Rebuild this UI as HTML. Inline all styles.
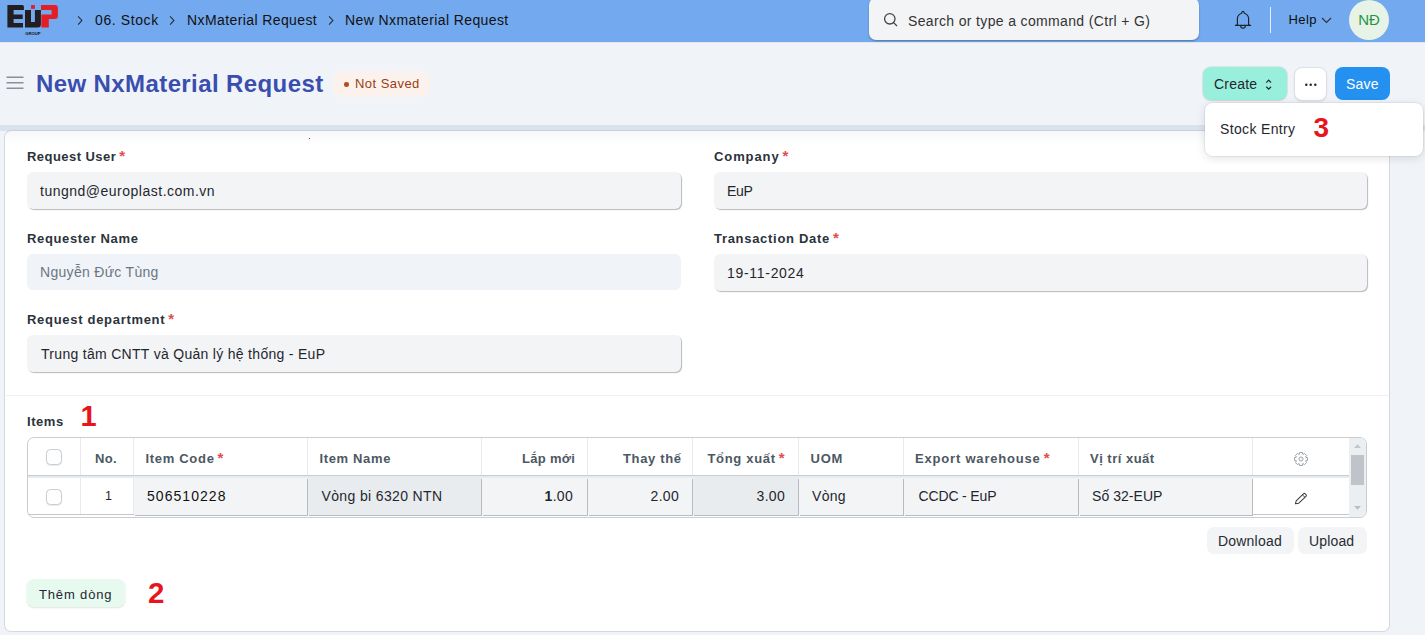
<!DOCTYPE html>
<html><head><meta charset="utf-8">
<style>
*{box-sizing:border-box;margin:0;padding:0}
html,body{width:1425px;height:635px;overflow:hidden;background:#f0f4f9;font-family:"Liberation Sans",sans-serif;color:#1f272e;position:relative}
.a{position:absolute;white-space:nowrap}
.hdr{left:0;top:0;width:1425px;height:42px;background:#73a9ee}
.crumb{font-size:14px;color:#111;top:12px;letter-spacing:.4px}
.search{left:869px;top:-2px;width:330px;height:42px;background:#f3f4f6;border-radius:7px;box-shadow:0 1px 2px rgba(0,0,0,.3)}
.avatar{left:1349px;top:0;width:40px;height:40px;border-radius:50%;background:#e8f3e8;color:#24963f;font-size:15px;text-align:center;line-height:40px}
.band{left:0;top:125px;width:1425px;height:6px;background:#d8e3ee}
.card{left:4px;top:130px;width:1386px;height:502px;background:linear-gradient(#f5f7fa,#fff 14px);border:1px solid #d6d9dc;border-top-color:#cdd1d6;border-radius:7px}
.title{left:36px;top:70px;font-size:24px;font-weight:bold;color:#3a4eae;letter-spacing:.4px}
.badge{left:333px;top:71px;width:97px;height:26px;background:#fcf2ed;border-radius:8px}
.lbl{font-size:13px;font-weight:bold;color:#2b333b;letter-spacing:.6px}
.req{color:#e24c4c;margin-left:3px;letter-spacing:0;font-size:15px;line-height:0}
.inp{height:37px;background:#f3f4f6;border-radius:6px;box-shadow:1px 1px 1px rgba(0,0,0,.28)}
.itxt{font-size:14px;color:#1f272e;letter-spacing:.3px}
.ann{color:#e8151c;font-weight:bold;font-size:29px;line-height:1}
.th{font-size:13px;font-weight:bold;color:#4c5863;letter-spacing:.4px;top:451px}
.td{font-size:14px;color:#1f272e;top:488px;letter-spacing:.3px}
.cellbg{top:476px;height:40px}
.vl{top:438px;width:1px;height:78px;background:#e6e9ec}
.cb{width:16px;height:15.5px;border:1px solid #c5ccd3;border-radius:4.5px;background:#fff;box-shadow:0 1px 1px rgba(0,0,0,.08)}
</style></head><body>
<!-- header -->
<div class="a hdr"></div>
<div class="a" style="left:0;top:42px;width:1425px;height:1px;background:#e4e7eb"></div>
<svg class="a" style="left:0;top:0" width="64" height="40" viewBox="0 0 64 40">
  <path fill="#231f20" d="M7.4 5.1H22.4Q23.9 5.1 23.9 6.6V9.9H13.6V14.5H22.7V19H13.6V23H23V27.5H7.4Z"/>
  <path fill="#231f20" d="M25 9.9H31V22H34.9V9.9H40.9V24.5Q40.9 27.5 37.9 27.5H25Z"/>
  <rect fill="#e31e24" x="31" y="5.1" width="3.9" height="3.7"/>
  <path fill="#e31e24" d="M41 5.1H54.9Q57.9 5.1 57.9 8.1V16Q57.9 19 54.9 19H48.8V27.5H41.4V14.5H51.6V9.9H41Z"/>
  <text x="32.9" y="34.5" font-size="4.2" font-weight="bold" text-anchor="middle" fill="#111" font-family="Liberation Sans">GROUP</text>
</svg>
<svg class="a" style="left:77px;top:16px" width="7" height="10" viewBox="0 0 7 10"><path d="M1.1 0.4L4.9 4.4L1.1 8.6" fill="none" stroke="#2a2f35" stroke-width="1.1"/></svg>
<div class="a crumb" style="left:95px;letter-spacing:.6px">06. Stock</div>
<svg class="a" style="left:169px;top:16px" width="7" height="10" viewBox="0 0 7 10"><path d="M1.1 0.4L4.9 4.4L1.1 8.6" fill="none" stroke="#2a2f35" stroke-width="1.1"/></svg>
<div class="a crumb" style="left:187px">NxMaterial Request</div>
<svg class="a" style="left:328px;top:16px" width="7" height="10" viewBox="0 0 7 10"><path d="M1.1 0.4L4.9 4.4L1.1 8.6" fill="none" stroke="#2a2f35" stroke-width="1.1"/></svg>
<div class="a crumb" style="left:345px">New Nxmaterial Request</div>
<div class="a search"></div>
<svg class="a" style="left:883px;top:12px" width="16" height="16" viewBox="0 0 16 16"><circle cx="6.8" cy="6.8" r="5.2" fill="none" stroke="#444" stroke-width="1.3"/><path d="M10.6 10.6L14 14" stroke="#444" stroke-width="1.3"/></svg>
<div class="a" style="left:908px;top:13px;font-size:14px;color:#333;letter-spacing:.35px">Search or type a command (Ctrl + G)</div>
<svg class="a" style="left:1228px;top:4px" width="32" height="32" viewBox="0 0 32 32"><path d="M13.6 9.2Q14.2 7.4 15 7.4Q15.8 7.4 16.4 9.2Q20.3 10.6 20.6 14.2V20.4L22.6 21.4H7.4L9.4 20.4V14.2Q9.7 10.6 13.6 9.2Z" fill="none" stroke="#1e2329" stroke-width="1.15" stroke-linejoin="round"/><path d="M12.6 21.7A2.4 2.4 0 0 0 17.4 21.7" fill="none" stroke="#1e2329" stroke-width="1.1"/></svg>
<div class="a" style="left:1270px;top:7px;width:1px;height:26px;background:#e8eef8"></div>
<div class="a" style="left:1288.5px;top:12px;font-size:13px;color:#0d0d0d;letter-spacing:.45px">Help</div>
<svg class="a" style="left:1321px;top:17px" width="11" height="7" viewBox="0 0 11 7"><path d="M1 1L5.5 5.5L10 1" fill="none" stroke="#333" stroke-width="1.2"/></svg>
<div class="a avatar">NĐ</div>

<!-- page head -->
<svg class="a" style="left:6px;top:76.3px" width="18" height="14" viewBox="0 0 18 14"><path d="M0.5 1.3H17.5M0.5 6.8H17.5M0.5 12.3H17.5" stroke="#8a9096" stroke-width="1.4"/></svg>
<div class="a title">New NxMaterial Request</div>
<div class="a badge"></div>
<div class="a" style="left:344px;top:82px;width:4.5px;height:4.5px;border-radius:50%;background:#b0501f"></div>
<div class="a" style="left:355px;top:76px;font-size:13px;color:#9a3d14;letter-spacing:.45px">Not Saved</div>

<div class="a" style="left:1203px;top:67px;width:84px;height:33px;background:#98f0dc;border-radius:8px;box-shadow:0 0 0 1px rgba(0,0,0,.06),0 1px 2px rgba(0,0,0,.08)"></div>
<div class="a" style="left:1214px;top:76px;font-size:14px;color:#1f272e;letter-spacing:.2px">Create</div>
<svg class="a" style="left:1264px;top:78px" width="9" height="12" viewBox="0 0 9 12"><path d="M2.3 4.6L4.7 2.1L7 4.6M2.3 8.7L4.7 11.1L7 8.7" fill="none" stroke="#22272c" stroke-width="1.25"/></svg>
<div class="a" style="left:1294px;top:66.5px;width:32.5px;height:34px;background:#fff;border:1px solid #dcdfe3;border-radius:8px;box-shadow:0 1px 2px rgba(0,0,0,.08)"></div>
<svg class="a" style="left:1303px;top:82px" width="14" height="4" viewBox="0 0 14 4"><circle cx="3.3" cy="2.7" r="1.25" fill="#22272c"/><circle cx="7.7" cy="2.7" r="1.25" fill="#22272c"/><circle cx="12.3" cy="2.7" r="1.25" fill="#22272c"/></svg>
<div class="a" style="left:1335px;top:67px;width:55px;height:33px;background:#2490ef;border-radius:8px"></div>
<div class="a" style="left:1346px;top:76px;font-size:14px;color:#fff;letter-spacing:.2px">Save</div>

<div class="a band"></div>
<div class="a card"></div>

<!-- dropdown -->
<div class="a" style="left:1204.5px;top:102.5px;width:218px;height:53px;background:#fff;border-radius:8px;box-shadow:0 0 0 1px rgba(0,0,0,.05),0 2px 10px rgba(0,0,0,.12)"></div>
<div class="a" style="left:1220px;top:121px;font-size:14px;color:#1f272e;letter-spacing:.35px">Stock Entry</div>
<div class="a ann" style="left:1313.5px;top:113.5px;font-size:28px">3</div>

<div class="a" style="left:309px;top:138px;width:1px;height:1px;background:#e8141c"></div>
<!-- form -->
<div class="a lbl" style="left:27px;top:149px;letter-spacing:.45px">Request User<span class="req">*</span></div>
<div class="a inp" style="left:27px;top:172px;width:654px"></div>
<div class="a itxt" style="left:40px;top:183px;letter-spacing:.5px">tungnd@europlast.com.vn</div>

<div class="a lbl" style="left:714px;top:149px;letter-spacing:.9px">Company<span class="req">*</span></div>
<div class="a inp" style="left:714px;top:172px;width:653px"></div>
<div class="a itxt" style="left:727px;top:183px;letter-spacing:-.3px">EuP</div>

<div class="a lbl" style="left:27px;top:231px;letter-spacing:.64px">Requester Name</div>
<div class="a inp" style="left:27px;top:254px;width:654px;height:36px;background:#f0f3f8;box-shadow:none"></div>
<div class="a itxt" style="left:40px;top:264px;color:#6c7680">Nguyễn Đức Tùng</div>

<div class="a lbl" style="left:714px;top:231px;letter-spacing:.7px">Transaction Date<span class="req">*</span></div>
<div class="a inp" style="left:714px;top:254px;width:653px"></div>
<div class="a itxt" style="left:727px;top:265px;letter-spacing:.7px">19-11-2024</div>

<div class="a lbl" style="left:27px;top:312px;letter-spacing:.7px">Request department<span class="req">*</span></div>
<div class="a inp" style="left:27px;top:335px;width:654px"></div>
<div class="a itxt" style="left:41px;top:346px">Trung tâm CNTT và Quản lý hệ thống - EuP</div>

<div class="a" style="left:6px;top:395px;width:1383px;height:1px;background:#eef0f2"></div>

<!-- items -->
<div class="a lbl" style="left:27px;top:414px;letter-spacing:.56px">Items</div>
<div class="a ann" style="left:80.5px;top:401.5px">1</div>

<div class="a" style="left:27px;top:437px;width:1340px;height:81px;border:1px solid #c9cdd1;border-radius:7px;background:#fff"></div>
<div class="a" style="left:28px;top:475px;width:1321px;height:1px;background:#c9cdd1"></div>
<div class="a" style="left:28px;top:476px;width:1321px;height:2px;background:#e6ebef"></div>
<div class="a" style="left:28px;top:514px;width:1321px;height:1px;background:#c3c7cb"></div>
<div class="a" style="left:80px;top:438px;width:1px;height:37px;background:#e8ebee"></div>
<div class="a" style="left:133px;top:438px;width:1px;height:37px;background:#e8ebee"></div>
<div class="a" style="left:307px;top:438px;width:1px;height:37px;background:#e8ebee"></div>
<div class="a" style="left:481px;top:438px;width:1px;height:37px;background:#e8ebee"></div>
<div class="a" style="left:587px;top:438px;width:1px;height:37px;background:#e8ebee"></div>
<div class="a" style="left:692px;top:438px;width:1px;height:37px;background:#e8ebee"></div>
<div class="a" style="left:798px;top:438px;width:1px;height:37px;background:#e8ebee"></div>
<div class="a" style="left:903px;top:438px;width:1px;height:37px;background:#e8ebee"></div>
<div class="a" style="left:1078px;top:438px;width:1px;height:37px;background:#e8ebee"></div>
<div class="a" style="left:1252px;top:438px;width:1px;height:37px;background:#e8ebee"></div>
<div class="a" style="left:80px;top:478px;width:1px;height:36px;background:#e8ebee"></div>
<div class="a" style="left:133px;top:478px;width:1px;height:36px;background:#e8ebee"></div>
<div class="a" style="left:134px;top:478px;width:174px;height:37px;background:#f3f4f6"></div>
<div class="a" style="left:308px;top:478px;width:174px;height:37px;background:#e9ecef"></div>
<div class="a" style="left:482px;top:478px;width:106px;height:37px;background:#f3f4f6"></div>
<div class="a" style="left:588px;top:478px;width:105px;height:37px;background:#f3f4f6"></div>
<div class="a" style="left:693px;top:478px;width:106px;height:37px;background:#e9ecef"></div>
<div class="a" style="left:799px;top:478px;width:105px;height:37px;background:#f3f4f6"></div>
<div class="a" style="left:904px;top:478px;width:175px;height:37px;background:#f3f4f6"></div>
<div class="a" style="left:1079px;top:478px;width:174px;height:37px;background:#f3f4f6"></div>
<div class="a" style="left:307px;top:479px;width:1px;height:37px;background:#b8bcc0"></div>
<div class="a" style="left:135px;top:515px;width:173px;height:1px;background:#b8bcc0"></div>
<div class="a" style="left:481px;top:479px;width:1px;height:37px;background:#b8bcc0"></div>
<div class="a" style="left:309px;top:515px;width:173px;height:1px;background:#b8bcc0"></div>
<div class="a" style="left:587px;top:479px;width:1px;height:37px;background:#b8bcc0"></div>
<div class="a" style="left:483px;top:515px;width:105px;height:1px;background:#b8bcc0"></div>
<div class="a" style="left:692px;top:479px;width:1px;height:37px;background:#b8bcc0"></div>
<div class="a" style="left:589px;top:515px;width:104px;height:1px;background:#b8bcc0"></div>
<div class="a" style="left:798px;top:479px;width:1px;height:37px;background:#b8bcc0"></div>
<div class="a" style="left:694px;top:515px;width:105px;height:1px;background:#b8bcc0"></div>
<div class="a" style="left:903px;top:479px;width:1px;height:37px;background:#b8bcc0"></div>
<div class="a" style="left:800px;top:515px;width:104px;height:1px;background:#b8bcc0"></div>
<div class="a" style="left:1078px;top:479px;width:1px;height:37px;background:#b8bcc0"></div>
<div class="a" style="left:905px;top:515px;width:174px;height:1px;background:#b8bcc0"></div>
<div class="a" style="left:1252px;top:479px;width:1px;height:37px;background:#b8bcc0"></div>
<div class="a" style="left:1080px;top:515px;width:173px;height:1px;background:#b8bcc0"></div>
<div class="a" style="left:1349px;top:438px;width:17px;height:79px;background:#eceff1;border-radius:0 6px 6px 0"></div>
<div class="a" style="left:1351px;top:455px;width:13px;height:30px;background:#c0c4ca"></div>
<svg class="a" style="left:1353px;top:443px" width="9" height="6" viewBox="0 0 9 6"><path d="M1 5L4.5 1.2L8 5Z" fill="#c3c7cc"/></svg>
<svg class="a" style="left:1353px;top:505px" width="9" height="6" viewBox="0 0 9 6"><path d="M1 1L4.5 4.8L8 1Z" fill="#b9bec3"/></svg>

<div class="a cb" style="left:46px;top:449px"></div>
<div class="a cb" style="left:46px;top:489px"></div>
<div class="a th" style="left:95px;letter-spacing:.3px">No.</div>
<div class="a th" style="left:145.5px;letter-spacing:.69px">Item Code<span class="req">*</span></div>
<div class="a th" style="left:319.5px;letter-spacing:.64px">Item Name</div>
<div class="a th" style="left:481px;width:94.3px;text-align:right;letter-spacing:.3px">Lắp mới</div>
<div class="a th" style="left:587px;width:94.7px;text-align:right;letter-spacing:.66px">Thay thế</div>
<div class="a th" style="left:707.5px;letter-spacing:.68px">Tổng xuất<span class="req">*</span></div>
<div class="a th" style="left:810.5px;letter-spacing:.77px">UOM</div>
<div class="a th" style="left:915px;letter-spacing:.81px">Export warehouse<span class="req">*</span></div>
<div class="a th" style="left:1090px;letter-spacing:.49px">Vị trí xuất</div>
<svg class="a" style="left:1292.6px;top:450.8px" width="16" height="16" viewBox="0 0 16 16"><path d="M6.24 3.32L6.56 1.56L9.44 1.56L9.76 3.32L10.06 3.45L11.54 2.43L13.57 4.46L12.55 5.94L12.68 6.24L14.44 6.56L14.44 9.44L12.68 9.76L12.55 10.06L13.57 11.54L11.54 13.57L10.06 12.55L9.76 12.68L9.44 14.44L6.56 14.44L6.24 12.68L5.94 12.55L4.46 13.57L2.43 11.54L3.45 10.06L3.32 9.76L1.56 9.44L1.56 6.56L3.32 6.24L3.45 5.94L2.43 4.46L4.46 2.43L5.94 3.45Z" fill="none" stroke="#9aa1a8" stroke-width="1" stroke-linejoin="round"/><circle cx="8" cy="8" r="2" fill="none" stroke="#9aa1a8" stroke-width="1"/></svg>

<div class="a td" style="left:105px;font-size:12.5px;top:489px">1</div>
<div class="a td" style="left:147px;letter-spacing:1.05px;color:#111">506510228</div>
<div class="a td" style="left:321.5px;letter-spacing:.36px">Vòng bi 6320 NTN</div>
<div class="a td" style="left:481px;width:92px;text-align:right"><b>1</b>.00</div>
<div class="a td" style="left:587px;width:92px;text-align:right">2.00</div>
<div class="a td" style="left:692px;width:93px;text-align:right">3.00</div>
<div class="a td" style="left:812px">Vòng</div>
<div class="a td" style="left:918.5px;letter-spacing:-.15px">CCDC - EuP</div>
<div class="a td" style="left:1092px;letter-spacing:.05px">Số 32-EUP</div>
<svg class="a" style="left:1294px;top:492px" width="14" height="14" viewBox="0 0 14 14"><path d="M1.4 11.8L2.2 8.8L9.4 1.8Q10.3 1 11.2 1.8L12 2.6Q12.8 3.5 12 4.4L4.8 11.2Z" fill="none" stroke="#3a3f45" stroke-width="1.05" stroke-linejoin="round"/><path d="M8.4 2.8L11 5.4" stroke="#3a3f45" stroke-width="1"/></svg>

<div class="a" style="left:1207px;top:527px;width:87px;height:27px;background:#f3f4f6;border-radius:7px"></div>
<div class="a" style="left:1218px;top:533px;font-size:14px;color:#262c32;letter-spacing:.2px">Download</div>
<div class="a" style="left:1298px;top:527px;width:69px;height:27px;background:#f3f4f6;border-radius:7px"></div>
<div class="a" style="left:1309px;top:533px;font-size:14px;color:#262c32;letter-spacing:.15px">Upload</div>

<div class="a" style="left:27px;top:579px;width:98px;height:28px;background:#e6faf0;border-radius:7px;box-shadow:0 1px 2px rgba(0,0,0,.12)"></div>
<div class="a" style="left:39px;top:587px;font-size:13px;color:#1f272e;letter-spacing:.85px">Thêm dòng</div>
<div class="a ann" style="left:148px;top:578px;font-size:29.5px">2</div>
</body></html>
